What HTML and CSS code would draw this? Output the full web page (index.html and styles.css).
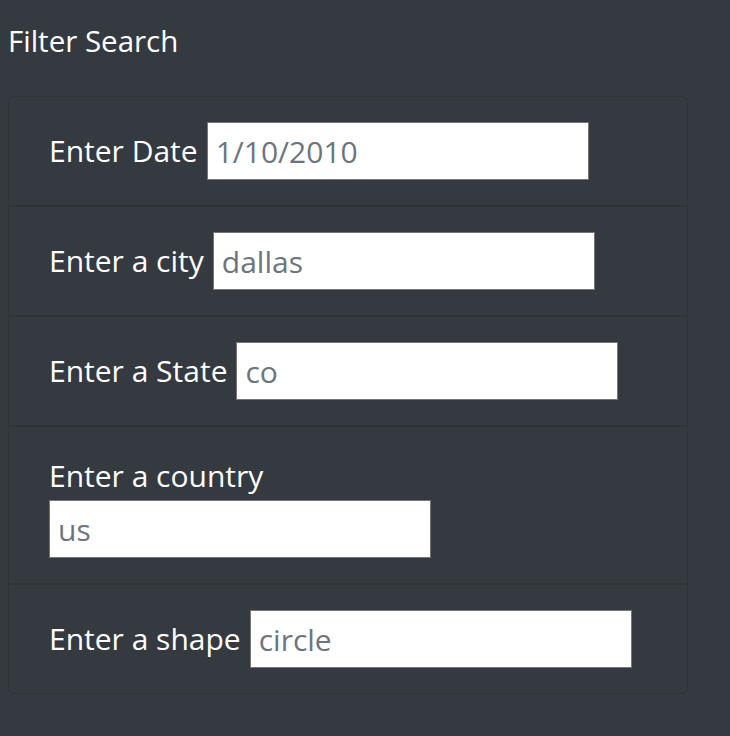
FILE: index.html
```html
<!DOCTYPE html>
<html>
<head>
<meta charset="utf-8">
<link rel="stylesheet" href="styles.css">
</head>
<body>
<h1 class="title">Filter Search</h1>
<ul class="filters">
  <li class="filter-row"><label class="filter-label" for="date">Enter Date</label><input class="filter-input" id="date" type="text" value="1/10/2010"></li>
  <li class="filter-row"><label class="filter-label" for="city">Enter a city</label><input class="filter-input" id="city" type="text" value="dallas"></li>
  <li class="filter-row"><label class="filter-label" for="state">Enter a State</label><input class="filter-input" id="state" type="text" value="co"></li>
  <li class="filter-row"><label class="filter-label" for="country">Enter a country</label><input class="filter-input" id="country" type="text" value="us"></li>
  <li class="filter-row"><label class="filter-label" for="shape">Enter a shape</label><input class="filter-input" id="shape" type="text" value="circle"></li>
</ul>
</body>
</html>
```
FILE: styles.css
```css
html, body {
  background: #343a40;
}
body {
  margin: 0;
  padding: 8px;
  color: #fff;
  font-family: "Open Sans", "Noto Sans", sans-serif;
}
.title {
  margin: 17px 0 39px;
  font-size: 29.5px;
  font-weight: 400;
  line-height: 32px;
}
.filters {
  list-style: none;
  margin: 0;
  padding: 0;
  width: 680px;
  border: 1px solid #2e3338;
  border-radius: 6px;
  box-sizing: border-box;
}
.filter-row {
  display: flex;
  flex-wrap: wrap;
  align-items: center;
  padding: 25px 42px 25px 40px;
  border-top: 2px solid #2e3338;
}
.filter-row:first-child {
  border-top: none;
}
.filter-label {
  font-size: 30px;
  line-height: 48px;
  margin-right: 9px;
}
.filter-input {
  box-sizing: border-box;
  width: 382px;
  height: 58px;
  margin: 0;
  padding: 0 8px;
  border: 1px solid #767676;
  background: #fff;
  color: #6c757d;
  font-family: "Open Sans", "Noto Sans", sans-serif;
  font-size: 30px;
}
```
